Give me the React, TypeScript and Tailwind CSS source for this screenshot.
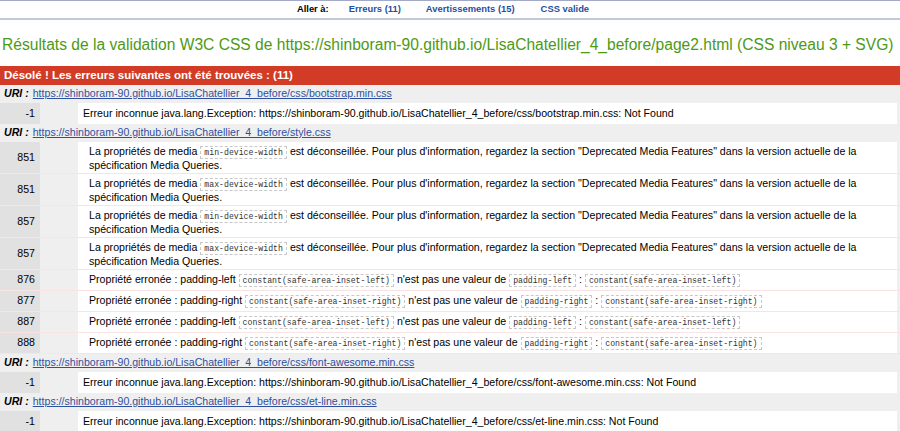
const BASE = 'https://shinboram-90.github.io/LisaChatellier_4_before/'

type Row =
  | { kind: 'uri'; file: string }
  | { kind: 'unknown'; file: string }
  | { kind: 'media'; line: number; prop: string }
  | { kind: 'padding'; line: number; side: 'left' | 'right' }

const ROWS: Row[] = [
  { kind: 'uri', file: 'css/bootstrap.min.css' },
  { kind: 'unknown', file: 'css/bootstrap.min.css' },
  { kind: 'uri', file: 'style.css' },
  { kind: 'media', line: 851, prop: 'min-device-width' },
  { kind: 'media', line: 851, prop: 'max-device-width' },
  { kind: 'media', line: 857, prop: 'min-device-width' },
  { kind: 'media', line: 857, prop: 'max-device-width' },
  { kind: 'padding', line: 876, side: 'left' },
  { kind: 'padding', line: 877, side: 'right' },
  { kind: 'padding', line: 887, side: 'left' },
  { kind: 'padding', line: 888, side: 'right' },
  { kind: 'uri', file: 'css/font-awesome.min.css' },
  { kind: 'unknown', file: 'css/font-awesome.min.css' },
  { kind: 'uri', file: 'css/et-line.min.css' },
  { kind: 'unknown', file: 'css/et-line.min.css' },
]

function Code({ children }: { children: string }) {
  return (
    <code className="border border-dashed border-[#c8c8c8] px-[3px] py-[1px] text-[8.2px] leading-none text-[#333] [font-family:'Liberation_Mono',monospace]">
      {children}
    </code>
  )
}

function LineCell({ children }: { children: React.ReactNode }) {
  return (
    <>
      <div className="flex w-[40px] shrink-0 items-center justify-end bg-[#e1e1e1] pr-[5px]">{children}</div>
      <div className="w-[38px] shrink-0 bg-[#efefef]" />
    </>
  )
}

function renderRow(r: Row, i: number) {
  if (r.kind === 'uri') {
    return (
      <div key={i} className="flex h-[18px] items-center bg-[#efefef] pl-[4px]">
        <span className="font-bold italic text-black">URI :</span>
        <a className="ml-[4px] text-[#2f4f9f] underline" href="#">
          {BASE + r.file}
        </a>
      </div>
    )
  }
  if (r.kind === 'unknown') {
    return (
      <div key={i} className="flex h-[21px]">
        <LineCell>-1</LineCell>
        <div className="flex flex-1 items-center bg-white mr-[3px] pl-[5px]">
          Erreur inconnue java.lang.Exception: {BASE + r.file}: Not Found
        </div>
      </div>
    )
  }
  if (r.kind === 'media') {
    return (
      <div key={i} className="flex h-[32px] border-b border-[#fbe3e3]">
        <LineCell>{r.line}</LineCell>
        <div className="flex-1 bg-white mr-[3px] pt-[2px] pl-[11px] pr-2 leading-[14px]">
          La propriétés de media <Code>{r.prop}</Code> est déconseillée. Pour plus d'information, regardez la section
          "Deprecated Media Features" dans la version actuelle de la spécification Media Queries.
        </div>
      </div>
    )
  }
  const val = `constant(safe-area-inset-${r.side})`
  return (
    <div key={i} className="flex h-[21px] border-b border-[#fbe3e3]">
      <LineCell>{r.line}</LineCell>
      <div className="flex flex-1 items-center bg-white mr-[3px] pl-[11px]">
        <span className="whitespace-pre">
          Propriété erronée : padding-{r.side} <Code>{val}</Code> n'est pas une valeur de{' '}
          <Code>{`padding-${r.side}`}</Code> : <Code>{val}</Code>
        </span>
      </div>
    </div>
  )
}

export default function App() {
  return (
    <div className="h-[431px] w-[900px] overflow-hidden bg-white text-[10.6px] text-black [font-family:'Liberation_Sans',Arial,sans-serif]">
      <div className="flex h-[20px] items-center justify-center border-t border-t-[#a3aac7] border-b-2 border-b-[#c3c9dc] pr-[14px] text-[9.4px] font-bold">
        <span className="mr-[20px]">Aller à:</span>
        <a className="mr-[25px] text-[#1f4fa0]" href="#">Erreurs (11)</a>
        <a className="mr-[26px] text-[#1f4fa0]" href="#">Avertissements (15)</a>
        <a className="text-[#1f4fa0]" href="#">CSS valide</a>
      </div>

      <h2 className="mt-[15px] mb-[11px] whitespace-nowrap pl-[2px] text-[15.6px] leading-[20px] text-[#4c9a14]">
        Résultats de la validation W3C CSS de https://shinboram-90.github.io/LisaChatellier_4_before/page2.html (CSS
        niveau 3 + SVG)
      </h2>

      <div className="flex h-[19px] items-center bg-[#d23c27] pl-[4px] text-[11.5px] font-bold text-white">
        Désolé ! Les erreurs suivantes ont été trouvées : (11)
      </div>

      <div className="bg-[#efefef]">{ROWS.map(renderRow)}</div>
    </div>
  )
}
